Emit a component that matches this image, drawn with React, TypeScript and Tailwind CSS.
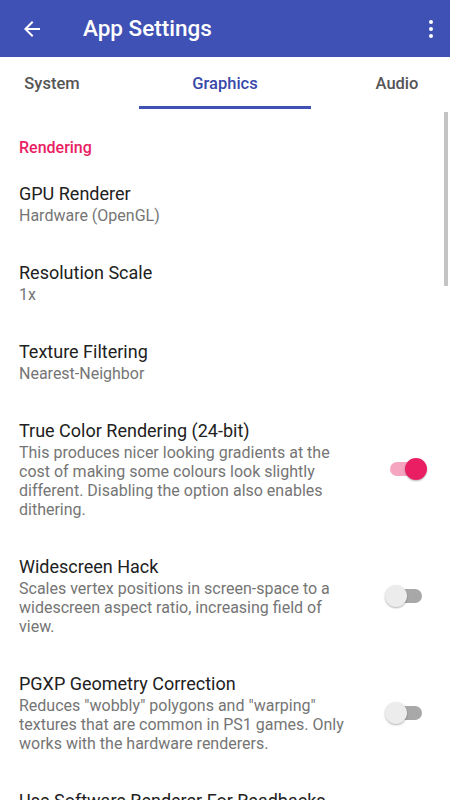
import * as React from "react";

type Pref = {
  title: string;
  summary: string;
  toggle?: boolean;
  on?: boolean;
};

const prefs: Pref[] = [
  { title: "GPU Renderer", summary: "Hardware (OpenGL)" },
  { title: "Resolution Scale", summary: "1x" },
  { title: "Texture Filtering", summary: "Nearest-Neighbor" },
  {
    title: "True Color Rendering (24-bit)",
    summary:
      "This produces nicer looking gradients at the cost of making some colours look slightly different. Disabling the option also enables dithering.",
    toggle: true,
    on: true,
  },
  {
    title: "Widescreen Hack",
    summary: "Scales vertex positions in screen-space to a widescreen aspect ratio, increasing field of view.",
    toggle: true,
  },
  {
    title: "PGXP Geometry Correction",
    summary: 'Reduces "wobbly" polygons and "warping" textures that are common in PS1 games. Only works with the hardware renderers.',
    toggle: true,
  },
  { title: "Use Software Renderer For Readbacks", summary: "" },
];

function Toggle({ on }: { on?: boolean }) {
  return (
    <div className="relative h-[22px] w-[44px]">
      <div className={`absolute left-[5px] top-[4px] h-[14px] w-[32px] rounded-full ${on ? "bg-[#f6a5c0]" : "bg-[#a8a8a8]"}`} />
      <div
        className={`absolute top-0 h-[22px] w-[22px] rounded-full shadow-[0_1px_2px_rgba(0,0,0,0.3)] ${
          on ? "left-[20px] bg-[#e91e63]" : "left-0 bg-[#ececec]"
        }`}
      />
    </div>
  );
}

export default function App() {
  return (
    <div className="relative h-[800px] w-[450px] overflow-hidden bg-white" style={{ fontFamily: "Roboto, 'Noto Sans', sans-serif" }}>
      {/* app bar */}
      <div className="flex h-[57px] items-center bg-[#3f51b5] text-white">
        <svg width="24" height="24" viewBox="0 0 24 24" className="ml-[20px]" fill="white">
          <path d="M20 11H7.83l5.59-5.59L12 4l-8 8 8 8 1.41-1.41L7.83 13H20v-2z" />
        </svg>
        <h1 className="ml-[39px] text-[22.5px] font-medium">App Settings</h1>
        <div className="ml-auto mr-[17px] flex flex-col gap-[3px]">
          <span className="h-[4px] w-[4px] rounded-full bg-white" />
          <span className="h-[4px] w-[4px] rounded-full bg-white" />
          <span className="h-[4px] w-[4px] rounded-full bg-white" />
        </div>
      </div>

      {/* tabs */}
      <div className="relative flex h-[54px] items-center bg-white text-[16.5px] font-medium">
        <div className="w-[104px] text-center text-[#555]">System</div>
        <div className="ml-[35px] w-[172px] text-center text-[#3949ab]">Graphics</div>
        <div className="ml-[33px] w-[106px] text-center text-[#555]">Audio</div>
        <div className="absolute bottom-[2px] left-[139px] h-[3px] w-[172px] bg-[#3f51b5]" />
      </div>

      {/* list */}
      <div className="pl-[19px]">
        <div className="pt-[25px] pb-[22px] text-[16px] font-medium text-[#e91e63]">Rendering</div>
        <div className="flex flex-col">
          {prefs.map((p) => (
            <div key={p.title} className="flex items-center pb-[36px]">
              <div className="min-w-0 flex-1 pr-[26px]">
                <div className="whitespace-nowrap text-[18px] leading-[24px] text-[#212121]">{p.title}</div>
                {p.summary && <div className="text-[16px] leading-[19px] text-[#757575]">{p.summary}</div>}
              </div>
              <div className="mr-[21px] w-[44px] shrink-0">{p.toggle && <Toggle on={p.on} />}</div>
            </div>
          ))}
        </div>
      </div>

      {/* scrollbar */}
      <div className="absolute right-[2px] top-[112px] h-[174px] w-[4px] bg-[#c4c4c4]" />
    </div>
  );
}
